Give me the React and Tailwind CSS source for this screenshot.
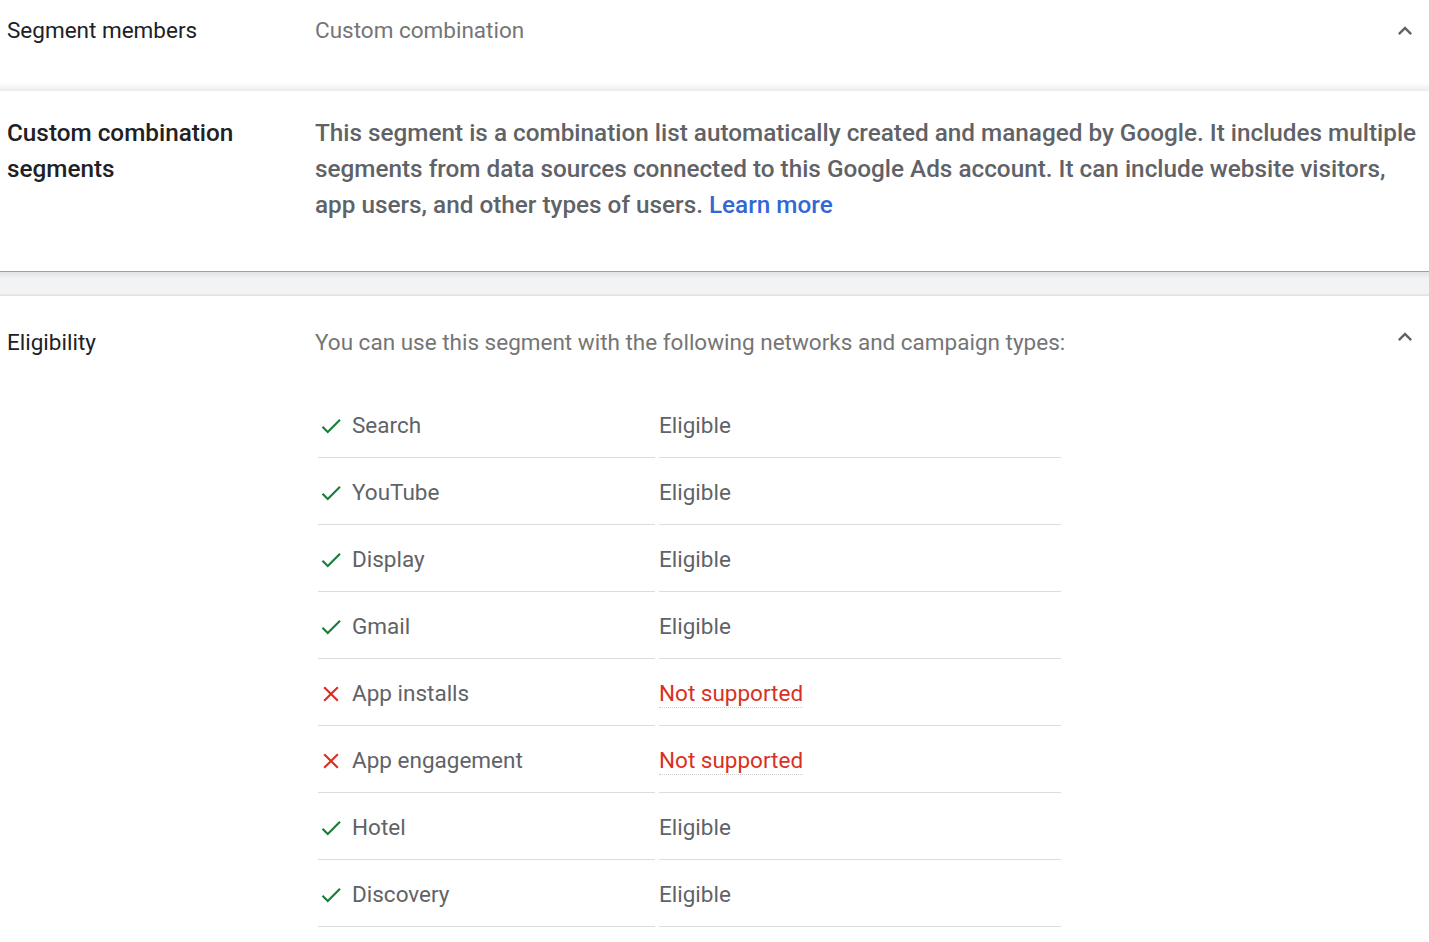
const CheckIcon = () => (
  <svg viewBox="0 0 24 24" className="w-[26px] h-[26px] shrink-0" fill="#188038">
    <path d="M9 16.17L4.83 12l-1.42 1.41L9 19 21 7l-1.41-1.41z" />
  </svg>
);

const CloseIcon = () => (
  <svg viewBox="0 0 24 24" className="w-[26px] h-[26px] shrink-0" fill="#d93025">
    <path d="M19 6.41L17.59 5 12 10.59 6.41 5 5 6.41 10.59 12 5 17.59 6.41 19 12 13.41 17.59 19 19 17.59 13.41 12z" />
  </svg>
);

const Chevron = () => (
  <svg viewBox="0 0 24 24" className="w-[28px] h-[28px]" fill="#5f6368">
    <path d="M12 8l-6 6 1.41 1.41L12 10.83l4.59 4.58L18 14z" />
  </svg>
);

const rows = [
  { name: "Search", ok: true },
  { name: "YouTube", ok: true },
  { name: "Display", ok: true },
  { name: "Gmail", ok: true },
  { name: "App installs", ok: false },
  { name: "App engagement", ok: false },
  { name: "Hotel", ok: true },
  { name: "Discovery", ok: true },
];

export default function App() {
  return (
    <div className="w-[1429px] min-h-[942px] bg-white font-['Roboto',sans-serif] text-[22.5px] overflow-hidden">
      {/* Segment members */}
      <div className="flex items-center h-[60px] pl-[7px] pt-[2px]">
        <div className="w-[308px] text-[#202124]">Segment members</div>
        <div className="flex-1 text-[#757575]">Custom combination</div>
        <div className="pr-[10px] flex items-center">
          <Chevron />
        </div>
      </div>
      <div className="h-[23px]" />
      <div className="h-[8px] bg-gradient-to-b from-white to-[#ebebeb]" />

      {/* Custom combination segments */}
      <div className="flex pl-[7px] pt-[24px] h-[180px] leading-[36px] font-medium text-[24.3px]">
        <div className="w-[308px] text-[#202124]">
          Custom combination
          <br />
          segments
        </div>
        <div className="flex-1 text-[#5f6368] whitespace-nowrap">
          This segment is a combination list automatically created and managed by Google. It includes multiple
          <br />
          segments from data sources connected to this Google Ads account. It can include website visitors,
          <br />
          app users, and other types of users. <span className="text-[#3367d6]">Learn more</span>
        </div>
      </div>

      {/* Divider band */}
      <div className="h-[1px] bg-[#a0a0a0]" />
      <div className="h-[22px] bg-gradient-to-b from-[#e2e2e2] via-[#f1f3f4] via-30% to-[#f1f3f4]" />
      <div className="h-[2px] bg-gradient-to-b from-[#ececec] to-[#e0e0e0]" />

      {/* Eligibility */}
      <div className="pl-[7px] pt-[31px]">
        <div className="flex items-center h-[32px]">
          <div className="w-[308px] text-[#202124]">Eligibility</div>
          <div className="flex-1 text-[#757575]">
            You can use this segment with the following networks and campaign types:
          </div>
          <div className="pr-[10px] flex items-center -mt-[13px]">
            <Chevron />
          </div>
        </div>

        <div className="ml-[311px] mt-[32px] w-[743px]">
          {rows.map((r) => (
            <div key={r.name} className="flex gap-[4px] h-[67px]">
              <div className="w-[337px] flex items-center gap-[8px] pt-[4px] border-b border-[#dadce0] text-[#5f6368]">
                {r.ok ? <CheckIcon /> : <CloseIcon />}
                <span>{r.name}</span>
              </div>
              <div className="flex-1 flex items-center pt-[4px] border-b border-[#dadce0]">
                {r.ok ? (
                  <span className="text-[#5f6368]">Eligible</span>
                ) : (
                  <span className="text-[#d93025] leading-[28px] border-b border-dotted border-[#cfcfcf] -mt-[2px]">
                    Not supported
                  </span>
                )}
              </div>
            </div>
          ))}
        </div>
      </div>
    </div>
  );
}
